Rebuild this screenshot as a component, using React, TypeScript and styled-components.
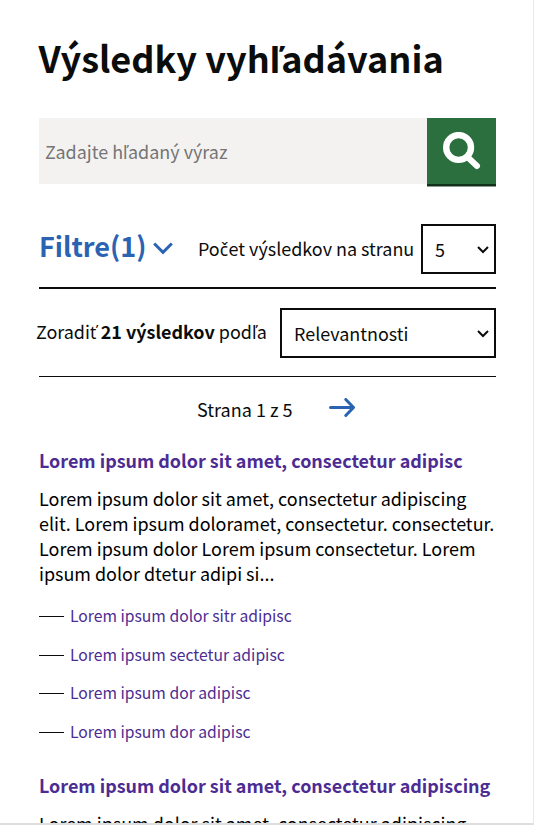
import React from "react";
import styled, { createGlobalStyle } from "styled-components";

const Global = createGlobalStyle`
  *, *::before, *::after { box-sizing: border-box; }
  html, body { margin: 0; overflow: hidden; background: #fff; }
  body { font-family: "Noto Sans CJK SC", "Noto Sans", sans-serif; color: #0b0c0c; }
`;

const Page = styled.main`
  width: 534px;
  height: 825px;
  overflow: hidden;
  border-right: 1px solid #e9e9e9;
  border-bottom: 2px solid #dedede;
  padding: 33px 37px 0 39px;
  display: flex;
  flex-direction: column;
`;

/* Slovak caron letters are missing from the main family. */
const Caron = styled.span`
  font-family: "Noto Sans", sans-serif;
  font-size: 0.97em;
  line-height: 0;
  margin-right: 0.025em;
`;

const Title = styled.h1`
  margin: 0 0 37px -0.5px;
  font-size: 36.1px;
  line-height: 48px;
  font-weight: 700;
  white-space: nowrap;
`;

const SearchBar = styled.form`
  display: flex;
  flex: none;
  height: 69px;
  align-items: flex-start;
`;

const SearchField = styled.label`
  display: grid;
  width: 388px;
  height: 66px;
  background: #f3f2f1;
  > * { grid-area: 1 / 1; }
`;

const SearchInput = styled.input`
  width: 100%;
  height: 100%;
  border: 0;
  padding: 0 6px;
  background: transparent;
  font-family: inherit;
  font-size: 17.95px;
`;

const Placeholder = styled.span`
  padding: 0 6px;
  color: #757575;
  font-size: 17.95px;
  line-height: 67px;
  white-space: nowrap;
  pointer-events: none;
`;

const SearchButton = styled.button`
  display: flex;
  width: 69px;
  height: 66px;
  padding: 14px 0 0 15px;
  border: 0;
  background: #2a6f3d;
  box-shadow: 0 2px 0 #12301c, 0 3px 0 #8a9a8e;
`;

const Row = styled.div<{ $height: number; $line: number }>`
  display: flex;
  flex: none;
  align-items: flex-start;
  height: ${(p) => p.$height}px;
  border-bottom: ${(p) => p.$line}px solid #0b0c0c;
`;

const FilterToggle = styled.button`
  display: flex;
  width: 159px;
  height: 50px;
  margin-top: 37px;
  padding: 0;
  border: 0;
  background: none;
  color: #2b63b3;
  font-family: inherit;
  font-size: 27px;
  line-height: 43px;
  font-weight: 700;
  svg { margin: 18px 0 0 7px; flex: none; }
`;

const FieldLabel = styled.label<{ $top: number; $width: number; $shift?: number }>`
  width: ${(p) => p.$width}px;
  margin-top: ${(p) => p.$top}px;
  margin-left: ${(p) => p.$shift ?? 0}px;
  font-size: 17.95px;
  line-height: 26px;
  white-space: nowrap;
`;

const SelectBox = styled.div<{ $width: number; $top: number }>`
  display: flex;
  flex: none;
  justify-content: space-between;
  width: ${(p) => p.$width}px;
  height: 50px;
  margin-top: ${(p) => p.$top}px;
  padding: 0 5px 0 12px;
  border: 2px solid #0b0c0c;
  font-size: 17.95px;
  line-height: 46px;
  svg { margin-top: 19px; }
`;

const Pager = styled.nav`
  display: flex;
  flex: none;
  height: 71px;
  padding: 20px 0 0 158px;
  font-size: 18.05px;
  line-height: 24px;
  svg { margin: 1px 0 0 36px; }
`;

const Result = styled.article`
  display: flex;
  flex-direction: column;
  flex: none;
`;

const ResultTitle = styled.a`
  color: #4c2c92;
  font-size: 17.95px;
  line-height: 25px;
  font-weight: 700;
  white-space: nowrap;
`;

const Excerpt = styled.p`
  margin: 13px 0 11px;
  font-size: 17.95px;
  line-height: 25px;
  color: #000;
  white-space: nowrap;
`;

const Crumbs = styled.ul`
  list-style: none;
  margin: 0 0 21px;
  padding: 0;
`;

const Crumb = styled.li`
  display: flex;
  align-items: center;
  gap: 6px;
  height: 38.7px;
  font-size: 15.7px;
  color: #4c2c92;
  &::before { content: ""; width: 25px; height: 1px; background: #0b0c0c; }
`;

const CrumbLink = styled.a`
  line-height: 25px;
  margin-bottom: 2px;
`;

const Chevron = () => (
  <svg width="12" height="9" viewBox="0 0 12 9" fill="none" stroke="#0b0c0c" strokeWidth="2">
    <path d="M1 2 6 7 11 2" />
  </svg>
);

const crumbs = [
  "Lorem ipsum dolor sitr adipisc",
  "Lorem ipsum sectetur adipisc",
  "Lorem ipsum dor adipisc",
  "Lorem ipsum dor adipisc",
];

export default function App() {
  return (
    <>
      <Global />
      <Page>
        <Title>Výsledky vyh<Caron>ľ</Caron>adávania</Title>
        <SearchBar>
          <SearchField>
            <SearchInput aria-label="Zadajte hľadaný výraz" />
            <Placeholder>Zadajte h<Caron>ľ</Caron>adaný výraz</Placeholder>
          </SearchField>
          <SearchButton type="button" aria-label="Hľadať">
            <svg width="40" height="40" viewBox="0 0 40 40" fill="none" stroke="#fff">
              <circle cx="16.6" cy="15.5" r="12.4" strokeWidth="6.4" />
              <path d="M26 25.5 35 34" strokeWidth="6" strokeLinecap="round" />
            </svg>
          </SearchButton>
        </SearchBar>
        <Row $height={102} $line={2}>
          <FilterToggle type="button">
            Filtre(1)
            <svg width="20" height="13" viewBox="0 0 20 13" fill="none" stroke="#2b63b3" strokeWidth="3">
              <path d="M1.2 1.5 10 10.3 18.8 1.5" />
            </svg>
          </FilterToggle>
          <FieldLabel $top={48} $width={223}>Po<Caron>č</Caron>et výsledkov na stranu</FieldLabel>
          <SelectBox $width={75} $top={37}>5<Chevron /></SelectBox>
        </Row>
        <Row $height={88} $line={1}>
          <FieldLabel $top={29} $width={244} $shift={-3}>
            Zoradi<Caron>ť</Caron> <b>21 výsledkov</b> pod<Caron>ľ</Caron>a
          </FieldLabel>
          <SelectBox $width={216} $top={19}>Relevantnosti<Chevron /></SelectBox>
        </Row>
        <Pager>
          Strana 1 z 5
          <svg width="27" height="20" viewBox="0 0 27 20" fill="none" stroke="#2b63b3" strokeWidth="3" strokeLinecap="round" strokeLinejoin="round">
            <path d="M1.5 9.5H24M16.8 1.5 24.5 9.5 16.8 17.5" />
          </svg>
        </Pager>
        <Result>
          <ResultTitle>Lorem ipsum dolor sit amet, consectetur adipisc</ResultTitle>
          <Excerpt>
            Lorem ipsum dolor sit amet, consectetur adipiscing<br />
            elit. Lorem ipsum doloramet, consectetur. consectetur.<br />
            Lorem ipsum dolor Lorem ipsum consectetur. Lorem<br />
            ipsum dolor dtetur adipi si...
          </Excerpt>
          <Crumbs>
            {crumbs.map((c, i) => <Crumb key={i}><CrumbLink>{c}</CrumbLink></Crumb>)}
          </Crumbs>
        </Result>
        <Result>
          <ResultTitle>Lorem ipsum dolor sit amet, consectetur adipiscing</ResultTitle>
          <Excerpt>Lorem ipsum dolor sit amet, consectetur adipiscing</Excerpt>
        </Result>
      </Page>
    </>
  );
}
